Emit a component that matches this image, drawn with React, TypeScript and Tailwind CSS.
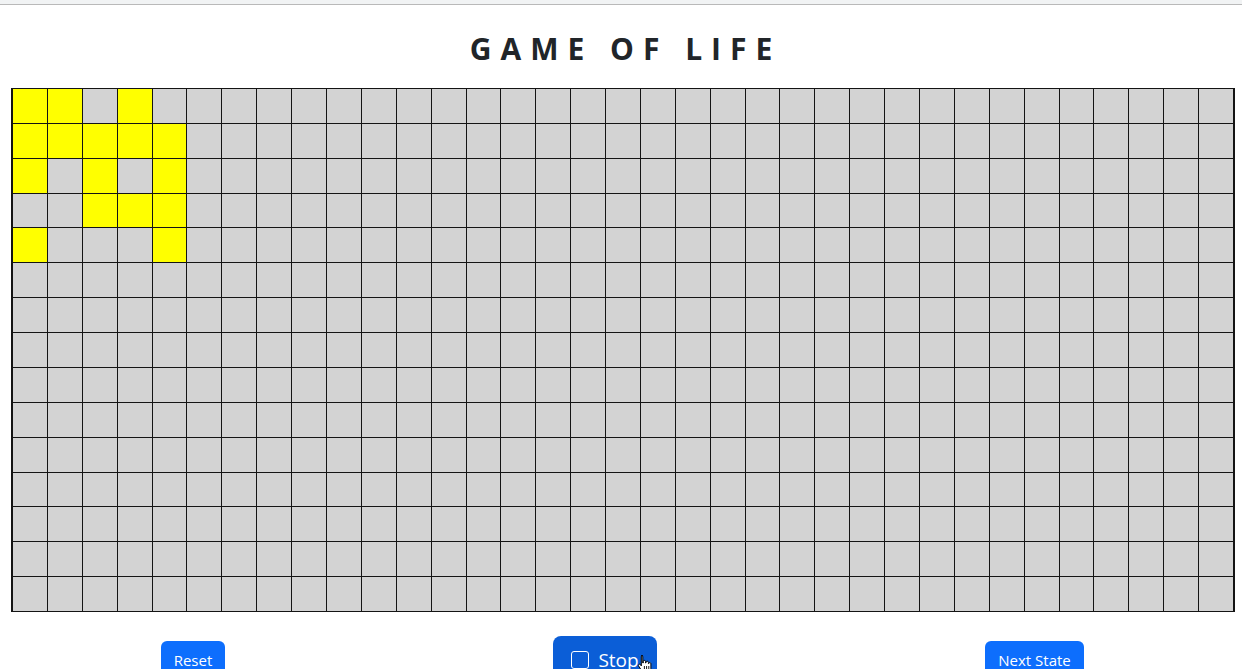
import React from 'react';

const ROWS = 15;
const COLS = 35;

// live cells of the current generation
const alive = new Set<string>([
  '0-0', '0-1', '0-3',
  '1-0', '1-1', '1-2', '1-3', '1-4',
  '2-0', '2-2', '2-4',
  '3-2', '3-3', '3-4',
  '4-0', '4-4',
]);

const HandCursor = () => (
  <svg width="16" height="20" viewBox="0 0 16 20" className="absolute left-[84px] top-[18px]">
    <path
      d="M4.5 1.5c.8 0 1.3.6 1.3 1.3V9h.4V7.6c0-.7.5-1.200 1.2-1.2s1.2.5 1.2 1.2V9h.4V8.4c0-.7.5-1.2 1.2-1.2s1.2.5 1.2 1.2V9.6h.3c0-.6.5-1 1.100-1s1.1.5 1.1 1.1v4.6c0 2.6-1.8 4.2-4.3 4.2H8.1c-1.5 0-2.6-.6-3.4-1.8L1.6 12c-.4-.6-.2-1.3.3-1.6.6-.4 1.3-.2 1.6.3l.8 1.2V2.8c0-.7.5-1.3 1.2-1.3z"
      fill="#fff"
      stroke="#000"
      strokeWidth="1"
      strokeLinejoin="round"
    />
    <path d="M7.4 12v3.5M9.6 12v3.5M11.8 12v3.5" stroke="#000" strokeWidth="0.9" />
  </svg>
);

export default function App() {
  return (
    <div className="min-h-screen bg-white overflow-hidden" style={{ fontFamily: '"Open Sans", "Noto Sans", sans-serif' }}>
      <div className="h-[5px] bg-[#f1f3f4] border-b border-[#b9b9b9]" />

      <h1 className="mt-[26px] text-center text-[30px] leading-[36px] font-bold tracking-[0.3em] pl-[0.3em] text-[#212529]">
        GAME OF LIFE
      </h1>

      <div className="mt-[21px] ml-[11px] w-[1224px] border-l-2 border-r-2 border-y border-[#141414] bg-[#141414]">
        <div className="grid grid-cols-[repeat(35,1fr)] grid-rows-[repeat(15,1fr)] gap-px h-[522px]">
          {Array.from({ length: ROWS * COLS }).map((_, i) => {
            const r = Math.floor(i / COLS);
            const c = i % COLS;
            const on = alive.has(`${r}-${c}`);
            return <div key={i} className={on ? 'bg-[#ffff00]' : 'bg-[#d3d3d3]'} />;
          })}
        </div>
      </div>

      <div className="flex items-center justify-between pl-[161px] pr-[158px] mt-[24px]">
        <button className="h-[38px] w-[64px] rounded-[6px] bg-[#0d6efd] text-white text-[15px] leading-[24px]">
          Reset
        </button>
        <button className="relative h-[48px] w-[104px] rounded-[8px] bg-[#0b5ed7] text-white text-[19px] flex items-center justify-center gap-[9px]">
          <span className="w-[18px] h-[18px] border-[1.5px] border-white rounded-[3px]" />
          <span>Stop</span>
          <HandCursor />
        </button>
        <button className="h-[38px] w-[99px] rounded-[6px] bg-[#0d6efd] text-white text-[15px] leading-[24px]">
          Next State
        </button>
      </div>
    </div>
  );
}
